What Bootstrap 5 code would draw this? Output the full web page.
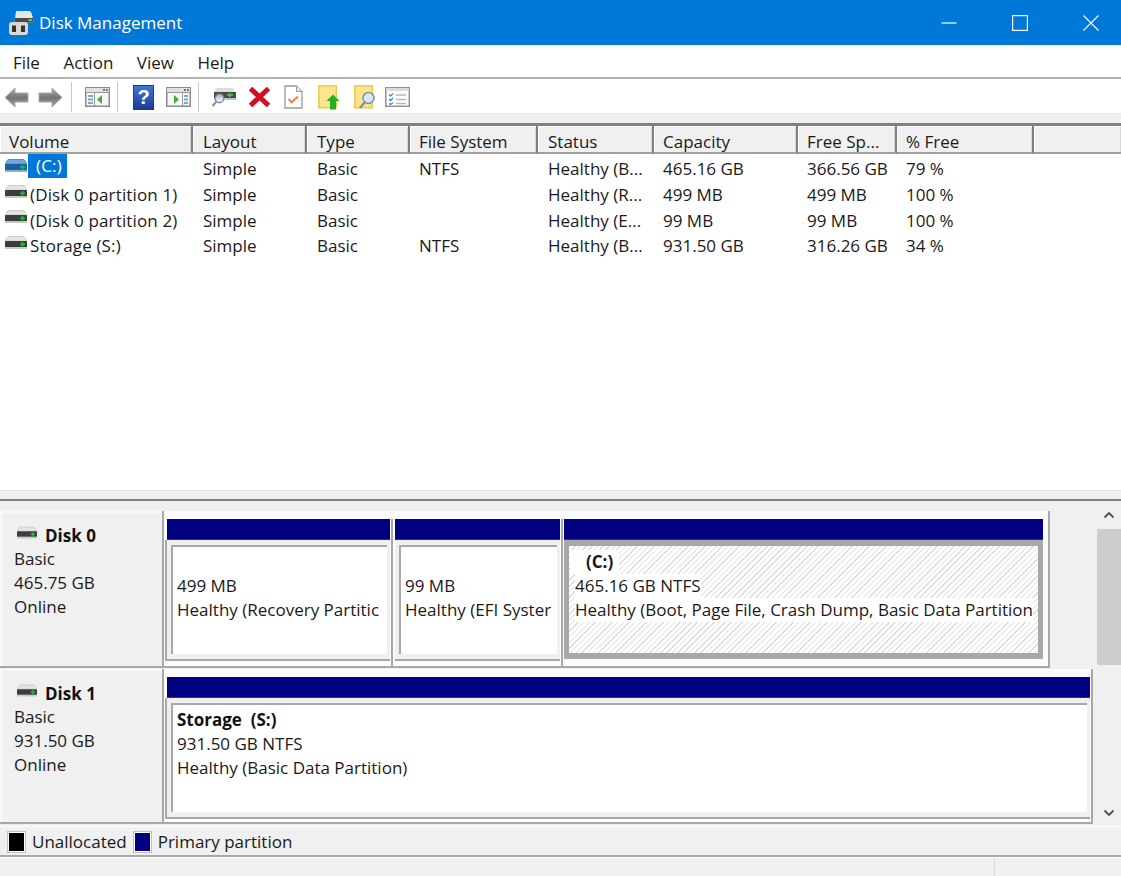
<!doctype html>
<html lang="en">
<head>
<meta charset="utf-8">
<title>Disk Management</title>
<link rel="stylesheet" href="https://cdn.jsdelivr.net/npm/bootstrap@5.3.0/dist/css/bootstrap.min.css">
<style>
html,body{height:876px;overflow:hidden}
body{font-family:"Open Sans","Noto Sans","Liberation Sans",sans-serif;font-size:17px;line-height:24px;color:#1a1a1a;background:#f0f0f0;width:1121px}
svg{display:block}
.win-title{height:45px;background:#0078d7;color:#fff}
.win-title .app-ico{margin-left:9px;margin-right:5px}
.win-btn{width:71px;height:45px;justify-content:center}
.win-last{margin-right:-5px}
.menu-strip{height:34px;background:#fff;border-bottom:2px solid #b4b4b4;padding:3px 0 0 13px}
.menu-strip span{margin-right:23.5px}
.tool-strip{height:34px;background:#fff;padding-top:2px}
.tbtn{width:34px;height:32px;justify-content:center}
.tsep{width:1px;height:30px;background:#c8c8c8;margin:0 8px 0 3px}
.nudge-l{margin-left:-1px}
.nudge-r{margin-right:1px}
.nudge-f{margin-left:2px}
.nudge-m{margin-left:2px;margin-right:-2px}
.tool-gap{height:10px;background:#f0f0f0;border-top:1px solid #e6e6e6}
.vol-pane{height:367px;background:#fff;border-top:3px solid #808080}
.vol-table{table-layout:fixed;width:1121px;margin:0;--bs-table-bg:transparent;border-collapse:separate;border-spacing:0}
.vol-table th{font-weight:400;height:28px;padding:6px 0 0 9px;background:#f0f0f0;border:0;border-bottom:2px solid #a0a0a0;border-right:2px solid #808080;box-shadow:inset 1px 1px 0 #fff,inset -1px 0 0 #d8d8d8;line-height:20px;white-space:nowrap;overflow:hidden;color:#1a1a1a}
.vol-table th:last-child{border-right:0}
.vol-table tbody tr:first-child td{padding-top:2px;height:28px}
.vol-table td{padding:0 0 0 9px;height:25.5px;border:0;line-height:25px;white-space:nowrap;overflow:hidden;color:#1a1a1a}
.vol-table tr>:nth-child(2),.vol-table tr>:nth-child(3),.vol-table tr>:nth-child(5){padding-left:10px}
.vol-table td.vol-name{padding-left:5px}
.c1{width:193px}.c2{width:114px}.c3{width:103px}.c4{width:128px}.c5{width:116px}.c6{width:144px}.c7{width:99px}.c8{width:137px}
.vol-cell{gap:3px}
.vol-cell svg{margin-bottom:6px}
.vol-table tbody tr:first-child .vol-cell svg{margin-bottom:1px}
.vol-cell span{letter-spacing:.15px}
.sel-name{background:#0078d7;color:#fff;padding:0 5px 0 8px;display:inline-block;margin:-2px 0 -2px -2px;line-height:24px}
.split-bar{height:11px;background:#f0f0f0;border-top:1px solid #e0e0e0;border-bottom:2px solid #808080}
.disk-pane{height:325px;background:#f0f0f0}
.disk-list{width:1097px}
.disk-row{height:157px}
.first-row{margin-top:10px}
.second-row{margin-top:1px;height:155px}
.disk-info{width:164px;background:#f0f0f0;border-right:2px solid #a8a8a8;border-bottom:2px solid #a8a8a8;box-shadow:inset 2px 2px 0 #f8f8f8;padding:13px 0 0 14px;flex:none}
.disk-head{font-weight:700;gap:8px;margin-left:3px;margin-bottom:-1px;color:#111}
.disk-head svg{margin-bottom:6px}
.disk-map{background:#fbfbfb;padding:8px 0 0 3px;border-right:2px solid #a8a8a8;border-bottom:2px solid #a8a8a8;flex:none}
.map-a{width:886px}
.map-b{width:929px}
.seg{flex:none;margin-right:1px}
.bar-navy{height:21px;background:#000080;border-bottom:1px solid #303070}
.seg-a{width:226px;border-right:2px solid #a8a8a8;padding-right:1px}
.seg-b{width:168px;border-right:2px solid #a8a8a8;padding-right:1px;margin-left:1px}
.seg-c{width:479px}
.seg-d{width:923px}
.seg-low{background:#f0f0f0;border-bottom:2px solid #a8a8a8;padding:5px 3px 5px 4px}
.seg-lead{margin-left:-2px;border-left:2px solid #a8a8a8;padding-left:4px}
.seg-box{height:109px;background:#fff;border-top:2px solid #a8a8a8;border-left:2px solid #a8a8a8;padding:3px 0 0 4px;white-space:nowrap;overflow:hidden}
.seg-box div{height:24px}
.seg-sel{height:119px;border-style:solid;border-color:#a8a8a8;border-width:6px 5px 6px 5px;background:repeating-linear-gradient(135deg,#dcdcdc 0 1px,#fff 1px 4px);padding:4px 0 0 6px;white-space:nowrap;overflow:hidden}
.seg-sel div{height:24px}
.seg-sel span{background:#fff;display:inline-block;height:24px}
.seg-sel .pad-l{padding:0 6px 0 16px;margin-left:-5px;font-weight:700}
.b{font-weight:700;color:#111}
.sbar{width:24px;flex:none;margin-left:0}
.sb-arrow{height:28px;justify-content:center}
.sb-track{height:270px}
.sb-thumb{height:136px;background:#cdcdcd}
.legend-strip{height:31px;background:#f0f0f0;border-top:1px solid #fff;border-bottom:2px solid #a8a8a8;padding:1px 0 0 8px}
.legend-sw{width:17px;height:20px;border:1px solid #fff;outline:1px solid #c0c0c0;margin-right:7px}
.sw-black{background:#000}
.sw-navy{background:#000080}
.leg-text{margin-right:7px}
.status-strip{height:20px;background:#f0f0f0;border-top:1px solid #fff}
.status-a{width:795px}
.status-div{width:200px;border-right:1px solid #d8d8d8}
</style>
</head>
<body>
<svg width="0" height="0" class="position-absolute">
<defs>
<linearGradient id="g-arrow" x1="0" y1="0" x2="0" y2="1"><stop offset="0" stop-color="#b0b0b0"/><stop offset=".5" stop-color="#747474"/><stop offset="1" stop-color="#a0a0a0"/></linearGradient>
<linearGradient id="g-help" x1="0" y1="0" x2="0" y2="1"><stop offset="0" stop-color="#3f78d8"/><stop offset="1" stop-color="#1c3a90"/></linearGradient>
<symbol id="hdd" viewBox="0 0 22 14"><path d="M3 0.5h16l3 4.500H0z" fill="#e4e4e4" stroke="#cccccc"/><rect x="0" y="5" width="22" height="7" rx="1" fill="#3c3c3c"/><rect x="0" y="11" width="22" height="2" fill="#c8c8c8"/><rect x="15" y="7.5" width="5" height="1.6" fill="#25c03a"/><rect x="16.7" y="6" width="1.6" height="4.6" fill="#25c03a"/></symbol>
<symbol id="hdd-b" viewBox="0 0 22 14"><path d="M3 0.5h16l3 4.500H0z" fill="#6ba9de" stroke="#4f93d0"/><rect x="0" y="5" width="22" height="7" rx="1" fill="#1f5f9a"/><rect x="0" y="11" width="22" height="2" fill="#7db3e0"/><rect x="15" y="7.5" width="5" height="1.6" fill="#25c03a"/><rect x="16.7" y="6" width="1.6" height="4.6" fill="#25c03a"/></symbol>
<symbol id="mini-win" viewBox="0 0 25 20"><rect x=".75" y=".75" width="23.5" height="18.5" fill="#f6f6f6" stroke="#8a8a8a" stroke-width="1.5"/><rect x="1" y="1" width="23" height="4" fill="#e0e0e0"/><rect x="1" y="5" width="23" height="1" fill="#9a9a9a"/><rect x="18" y="2" width="2" height="2" fill="#777"/><rect x="21" y="2" width="2" height="2" fill="#777"/></symbol>
</defs>
</svg>

<header class="win-title d-flex align-items-center">
  <svg class="app-ico" width="25" height="25" viewBox="0 0 25 25"><path d="M7 1h13a2.500 2.500 0 0 1 2.300 1.800l2.200 6.700a2 2 0 0 1-2 3H5.500z" fill="#e6e6e6"/><path d="M6 8h18.500v3a1.500 1.500 0 0 1-1.500 1.500H6z" fill="#4a4a4a"/><rect x="19.500" y="9" width="3.500" height="2" fill="#3fe04f"/><rect x="0" y="12" width="19" height="13" rx="3" fill="#dcd8d0"/><rect x="3" y="15.500" width="4" height="6.500" fill="#333"/><rect x="12" y="15.500" width="4" height="6.500" fill="#333"/></svg>
  <span class="flex-grow-1">Disk Management</span>
  <div class="win-btn d-flex align-items-center"><svg width="16" height="16" viewBox="0 0 16 16"><path d="M0.500 8h15" stroke="#fff" stroke-width="1.200"/></svg></div>
  <div class="win-btn d-flex align-items-center"><svg width="16" height="16" viewBox="0 0 16 16"><rect x=".6" y=".6" width="14.800" height="14.800" fill="none" stroke="#fff" stroke-width="1.200"/></svg></div>
  <div class="win-btn win-last d-flex align-items-center"><svg width="16" height="16" viewBox="0 0 16 16"><path d="M.5.5l15 15M15.500.5l-15 15" stroke="#fff" stroke-width="1.100"/></svg></div>
</header>

<nav class="menu-strip d-flex align-items-center">
  <span>File</span><span>Action</span><span>View</span><span>Help</span>
</nav>

<div class="tool-strip d-flex align-items-center">
  <div class="tbtn nudge-l d-flex align-items-center"><svg width="25" height="21" viewBox="0 0 25 21"><path d="M11 1L1 10.500 11 20v-5h13V6H11z" fill="url(#g-arrow)" stroke="#a8a8a8"/></svg></div>
  <div class="tbtn d-flex align-items-center"><svg width="25" height="21" viewBox="0 0 25 21"><path d="M14 1l10 9.500L14 20v-5H1V6h13z" fill="url(#g-arrow)" stroke="#a8a8a8"/></svg></div>
  <div class="tsep ms-1"></div>
  <div class="tbtn d-flex align-items-center"><svg width="25" height="20" viewBox="0 0 25 20"><use href="#mini-win"/><path d="M3 8h5v2H3zM3 11.500h5v2H3zM3 15h5v2H3z" fill="#7ea6c8"/><rect x="9" y="6" width="1" height="13" fill="#9a9a9a"/><path d="M17 8v9l-5-4.500z" fill="#3fae3f"/></svg></div>
  <div class="tsep"></div>
  <div class="tbtn nudge-r d-flex align-items-center"><svg width="21" height="25" viewBox="0 0 21 25"><rect x=".5" y=".5" width="20" height="24" fill="url(#g-help)" stroke="#1c3a90"/><text x="10.500" y="19" text-anchor="middle" font-family="Liberation Sans,sans-serif" font-weight="700" font-size="20" fill="#fff">?</text></svg></div>
  <div class="tbtn d-flex align-items-center"><svg width="25" height="20" viewBox="0 0 25 20"><use href="#mini-win"/><path d="M18 8h4v2h-4zM18 11.500h4v2h-4zM18 15h4v2h-4z" fill="#7ea6c8"/><rect x="16" y="6" width="1" height="13" fill="#9a9a9a"/><path d="M8 8v9l5-4.500z" fill="#3fae3f"/></svg></div>
  <div class="tsep"></div>
  <div class="tbtn nudge-r d-flex align-items-center"><svg width="24" height="20" viewBox="0 0 24 20"><path d="M4 1h17l2 4H2z" fill="#dedede"/><rect x="2" y="5" width="22" height="6" fill="#4a4a4a"/><rect x="2" y="11" width="22" height="2" fill="#c0c0c0"/><path d="M15 8h6M18 6v4" stroke="#3fd04f" stroke-width="1.500"/><circle cx="7.500" cy="11.500" r="4.200" fill="#dfeaf5" fill-opacity=".8" stroke="#7f8f9f" stroke-width="1.400"/><path d="M4.500 14.500L.5 19" stroke="#8090a0" stroke-width="2.200"/></svg></div>
  <div class="tbtn d-flex align-items-center"><svg width="23" height="22" viewBox="0 0 23 22"><path d="M2.500 2.500l18 17M20.500 2.500l-18 17" stroke="#d0101c" stroke-width="5"/></svg></div>
  <div class="tbtn d-flex align-items-center"><svg width="19" height="24" viewBox="0 0 19 24"><path d="M1 1h11.500L18 6.500V23H1z" fill="#fff" stroke="#9a9a9a" stroke-width="1.300"/><path d="M12.500 1v5.500H18" fill="#e8e8e8" stroke="#9a9a9a"/><path d="M4.500 14l3 3.500 6.500-6" fill="none" stroke="#ee7a3c" stroke-width="1.800"/></svg></div>
  <div class="tbtn nudge-f d-flex align-items-center"><svg width="22" height="25" viewBox="0 0 22 25"><rect x=".8" y=".8" width="17.500" height="22" fill="#fde58d" stroke="#efc94f" stroke-width="1.500"/><path d="M15 9.500l6.500 6.500h-3.500v8.500h-6V16H8.500z" fill="#22b022"/></svg></div>
  <div class="tbtn nudge-m d-flex align-items-center"><svg width="22" height="25" viewBox="0 0 22 25"><rect x=".8" y=".8" width="17.500" height="22" fill="#fde58d" stroke="#efc94f" stroke-width="1.500"/><circle cx="14.500" cy="13" r="5.500" fill="#d8e8f5" stroke="#8094a8" stroke-width="1.500"/><path d="M10.500 17.500L6 23" stroke="#8094a8" stroke-width="2.500"/></svg></div>
  <div class="tbtn d-flex align-items-center"><svg width="25" height="20" viewBox="0 0 25 20"><rect x=".8" y=".8" width="23.500" height="18.500" fill="#fff" stroke="#909090" stroke-width="1.500"/><rect x="1" y="1" width="23" height="3" fill="#dadada"/><path d="M4 7.500l1.500 1.500L8 6.500M4 12l1.500 1.500L8 11M4 16.500l1.500 1L8 15.500" fill="none" stroke="#3d8fd8" stroke-width="1.400"/><path d="M11 8h10M11 12.500h10M11 16.500h10" stroke="#b8b8b8" stroke-width="1.400"/></svg></div>
</div>
<div class="tool-gap"></div>

<section class="vol-pane overflow-hidden">
  <table class="table vol-table">
    <colgroup><col class="c1"><col class="c2"><col class="c3"><col class="c4"><col class="c5"><col class="c6"><col class="c7"><col class="c8"><col></colgroup>
    <thead><tr><th>Volume</th><th>Layout</th><th>Type</th><th>File System</th><th>Status</th><th>Capacity</th><th>Free Sp...</th><th>% Free</th><th></th></tr></thead>
    <tbody>
      <tr><td class="vol-name"><div class="d-flex align-items-center vol-cell"><svg width="22" height="14"><use href="#hdd-b"/></svg><span class="sel-name">(C:)</span></div></td><td>Simple</td><td>Basic</td><td>NTFS</td><td>Healthy (B...</td><td>465.16 GB</td><td>366.56 GB</td><td>79 %</td><td></td></tr>
      <tr><td class="vol-name"><div class="d-flex align-items-center vol-cell"><svg width="22" height="14"><use href="#hdd"/></svg><span>(Disk 0 partition 1)</span></div></td><td>Simple</td><td>Basic</td><td></td><td>Healthy (R...</td><td>499 MB</td><td>499 MB</td><td>100 %</td><td></td></tr>
      <tr><td class="vol-name"><div class="d-flex align-items-center vol-cell"><svg width="22" height="14"><use href="#hdd"/></svg><span>(Disk 0 partition 2)</span></div></td><td>Simple</td><td>Basic</td><td></td><td>Healthy (E...</td><td>99 MB</td><td>99 MB</td><td>100 %</td><td></td></tr>
      <tr><td class="vol-name"><div class="d-flex align-items-center vol-cell"><svg width="22" height="14"><use href="#hdd"/></svg><span>Storage (S:)</span></div></td><td>Simple</td><td>Basic</td><td>NTFS</td><td>Healthy (B...</td><td>931.50 GB</td><td>316.26 GB</td><td>34 %</td><td></td></tr>
    </tbody>
  </table>
</section>

<div class="split-bar"></div>

<section class="disk-pane d-flex">
  <div class="disk-list">
    <div class="disk-row first-row d-flex">
      <div class="disk-info">
        <div class="disk-head d-flex align-items-center"><svg width="20" height="14"><use href="#hdd"/></svg><span>Disk 0</span></div>
        <div>Basic</div><div>465.75 GB</div><div>Online</div>
      </div>
      <div class="disk-map map-a d-flex">
        <div class="seg seg-a"><div class="bar-navy"></div><div class="seg-low seg-lead"><div class="seg-box"><div></div><div>499 MB</div><div>Healthy (Recovery Partitic</div></div></div></div>
        <div class="seg seg-b"><div class="bar-navy"></div><div class="seg-low"><div class="seg-box"><div></div><div>99 MB</div><div>Healthy (EFI Syster</div></div></div></div>
        <div class="seg seg-c"><div class="bar-navy"></div><div class="seg-sel"><div><span class="pad-l">(C:)</span></div><div><span>465.16 GB NTFS</span></div><div><span>Healthy (Boot, Page File, Crash Dump, Basic Data Partition</span></div></div></div>
      </div>
    </div>
    <div class="disk-row second-row d-flex">
      <div class="disk-info">
        <div class="disk-head d-flex align-items-center"><svg width="20" height="14"><use href="#hdd"/></svg><span>Disk 1</span></div>
        <div>Basic</div><div>931.50 GB</div><div>Online</div>
      </div>
      <div class="disk-map map-b">
        <div class="seg seg-d"><div class="bar-navy"></div><div class="seg-low seg-lead"><div class="seg-box"><div class="b">Storage&nbsp; (S:)</div><div>931.50 GB NTFS</div><div>Healthy (Basic Data Partition)</div></div></div></div>
      </div>
    </div>
  </div>
  <div class="sbar">
    <div class="sb-arrow d-flex align-items-center"><svg width="12" height="8" viewBox="0 0 12 8"><path d="M1.500 6.500L6 2l4.500 4.500" fill="none" stroke="#505050" stroke-width="1.800"/></svg></div>
    <div class="sb-track"><div class="sb-thumb"></div></div>
    <div class="sb-arrow d-flex align-items-center"><svg width="12" height="8" viewBox="0 0 12 8"><path d="M1.500 1.500L6 6l4.500-4.500" fill="none" stroke="#505050" stroke-width="1.800"/></svg></div>
  </div>
</section>

<div class="legend-strip d-flex align-items-center">
  <div class="legend-sw sw-black"></div><span class="leg-text">Unallocated</span>
  <div class="legend-sw sw-navy"></div><span>Primary partition</span>
</div>
<footer class="status-strip d-flex">
  <div class="status-a"></div><div class="status-div"></div>
</footer>
</body>
</html>
